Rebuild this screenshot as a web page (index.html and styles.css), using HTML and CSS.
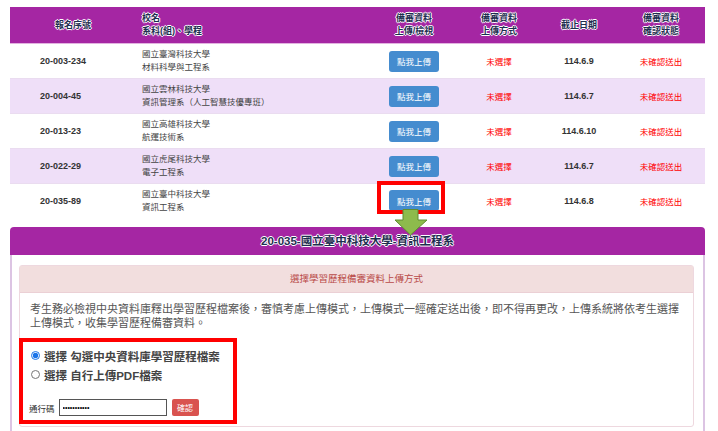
FILE: index.html
```html
<!DOCTYPE html>
<html lang="zh-Hant">
<head>
  <meta charset="UTF-8">
  <meta name="viewport" content="width=device-width, initial-scale=1.0">
  <title>備審資料上傳</title>
  <link rel="stylesheet" href="styles.css">
</head>
<body>
  <div class="page">
    <!-- 報名清單 -->
    <table class="apply-table">
      <colgroup>
        <col style="width:126px">
        <col style="width:235px">
        <col style="width:86px">
        <col style="width:84px">
        <col style="width:76px">
        <col style="width:88px">
      </colgroup>
      <thead>
        <tr>
          <th>報名序號</th>
          <th class="left">校名<br>系科(組)、學程</th>
          <th>備審資料<br>上傳/檢視</th>
          <th>備審資料<br>上傳方式</th>
          <th>截止日期</th>
          <th>備審資料<br>確認狀態</th>
        </tr>
      </thead>
      <tbody>
        <tr>
          <td class="num sn">20-003-234</td>
          <td class="school">國立臺灣科技大學<br>材料科學與工程系</td>
          <td><button class="btn-upload" type="button">點我上傳</button></td>
          <td class="red">未選擇</td>
          <td class="num">114.6.9</td>
          <td class="red">未確認送出</td>
        </tr>
        <tr>
          <td class="num sn">20-004-45</td>
          <td class="school">國立雲林科技大學<br>資訊管理系（人工智慧技優專班）</td>
          <td><button class="btn-upload" type="button">點我上傳</button></td>
          <td class="red">未選擇</td>
          <td class="num">114.6.7</td>
          <td class="red">未確認送出</td>
        </tr>
        <tr>
          <td class="num sn">20-013-23</td>
          <td class="school">國立高雄科技大學<br>航運技術系</td>
          <td><button class="btn-upload" type="button">點我上傳</button></td>
          <td class="red">未選擇</td>
          <td class="num">114.6.10</td>
          <td class="red">未確認送出</td>
        </tr>
        <tr>
          <td class="num sn">20-022-29</td>
          <td class="school">國立虎尾科技大學<br>電子工程系</td>
          <td><button class="btn-upload" type="button">點我上傳</button></td>
          <td class="red">未選擇</td>
          <td class="num">114.6.7</td>
          <td class="red">未確認送出</td>
        </tr>
        <tr class="last">
          <td class="num sn">20-035-89</td>
          <td class="school">國立臺中科技大學<br>資訊工程系</td>
          <td>
            <span class="btn-wrap">
              <button class="btn-upload" type="button">點我上傳</button>
              <span class="mark"></span>
              <svg class="arrow" width="34" height="27" viewBox="0 0 34 27">
                <polygon points="9,0.5 24,0.5 24,11 33,11 16.5,26 1,11 9,11" fill="#8dbb4c" stroke="#5f8d32" stroke-width="1"/>
              </svg>
            </span>
          </td>
          <td class="red">未選擇</td>
          <td class="num">114.6.8</td>
          <td class="red">未確認送出</td>
        </tr>
      </tbody>
    </table>

    <!-- 上傳方式 -->
    <div class="panel">
      <div class="panel-head">20-035-國立臺中科技大學-資訊工程系</div>
      <div class="panel-body">
        <div class="upload-box">
          <div class="upload-head">選擇學習歷程備審資料上傳方式</div>
          <div class="upload-body">
            <p class="notice">考生務必檢視中央資料庫釋出學習歷程檔案後，審慎考慮上傳模式，上傳模式一經確定送出後，即不得再更改，上傳系統將依考生選擇上傳模式，收集學習歷程備審資料。</p>
            <form class="choose-form">
              <label class="choice"><input type="radio" name="mode" checked> 選擇 勾選中央資料庫學習歷程檔案</label>
              <label class="choice"><input type="radio" name="mode"> 選擇 自行上傳PDF檔案</label>
              <div class="pass-row">
                <span>通行碼</span>
                <input class="pass" type="password" value="12345678901">
                <button class="btn-ok" type="button">確認</button>
              </div>
            </form>
          </div>
        </div>
      </div>
    </div>
  </div>
</body>
</html>
```

FILE: styles.css
```css
body {
  margin: 0;
  padding: 7px 0 0 10px;
  background: #fff;
  font-family: "Liberation Sans", "Noto Sans CJK TC", sans-serif;
}

.page {
  width: 695px;
}

.apply-table {
  width: 100%;
  border-collapse: collapse;
  table-layout: fixed;
}

.apply-table th {
  background-color: #a526a3;
  height: 36px;
  padding: 0;
  font-size: 9px;
  line-height: 13px;
  font-weight: bold;
  color: #1e2d50;
  text-align: center;
  text-shadow: 1px 0 0 #fff, -1px 0 0 #fff, 0 1px 0 #fff, 0 -1px 0 #fff;
  border-bottom: 1px solid #e2b2e0;
}

.apply-table th.left {
  text-align: left;
  padding-left: 6px;
}

.apply-table td {
  height: 34px;
  padding: 0;
  font-size: 8.5px;
  text-align: center;
  color: #444;
  border-top: 1px solid #eadcf0;
}

.apply-table tbody tr:nth-child(even) td {
  background-color: #efdff8;
}

.apply-table tr.last td {
  height: 33px;
}

.apply-table td.school {
  text-align: left;
  padding-left: 6px;
  line-height: 13px;
}

.apply-table td.num {
  font-weight: bold;
  font-size: 9px;
  color: #333;
}

.apply-table td.sn {
  text-align: left;
  padding-left: 30px;
}

.apply-table td.red {
  color: #f00;
}

.btn-upload {
  width: 50px;
  height: 21px;
  padding: 0;
  border: none;
  border-radius: 3px;
  background-color: #458ccf;
  color: #fff;
  font-family: inherit;
  font-size: 8.5px;
  vertical-align: middle;
}

.btn-wrap {
  position: relative;
  display: inline-block;
  vertical-align: middle;
  line-height: 0;
}

/* annotation marks */
.mark {
  position: absolute;
  left: -12px;
  right: -6px;
  top: -9px;
  bottom: -3px;
  border: 4px solid #f00;
}

.arrow {
  position: absolute;
  left: 5px;
  top: 19px;
  z-index: 2;
}

.panel {
  margin-top: 10px;
}

.panel-head {
  height: 28px;
  line-height: 28px;
  background-color: #a526a3;
  border-radius: 4px 4px 0 0;
  text-align: center;
  font-size: 11.5px;
  font-weight: bold;
  color: #1e2d50;
  text-shadow: 1px 0 0 #fff, -1px 0 0 #fff, 0 1px 0 #fff, 0 -1px 0 #fff;
}

.panel-body {
  border: 2px solid #dcc4e3;
  border-top: none;
  padding: 10px 9px 20px 7px;
}

.upload-box {
  border: 1px solid #eed8df;
  border-radius: 3px;
}

.upload-head {
  height: 26px;
  line-height: 26px;
  background-color: #f2dede;
  border-bottom: 1px solid #ebd0d5;
  color: #b94a48;
  font-size: 9.5px;
  text-align: center;
}

.upload-body {
  padding: 9px 10px 2px;
}

.notice {
  margin: 0;
  font-size: 11px;
  line-height: 14px;
  color: #555;
}

.choose-form {
  box-sizing: border-box;
  width: 218px;
  height: 86px;
  margin: 8px 0 0 -11px;
  padding: 4px 0 0 8px;
  border: 4px solid #f00;
}

.choice {
  display: flex;
  align-items: center;
  gap: 4px;
  height: 19px;
  font-size: 11.5px;
  font-weight: bold;
  color: #444;
}

.choice input {
  width: 9px;
  height: 9px;
  margin: 0;
  accent-color: #1a73e8;
}

.pass-row {
  display: flex;
  align-items: center;
  margin-top: 15px;
  margin-left: -2px;
  font-size: 8.5px;
  color: #333;
}

.pass {
  box-sizing: border-box;
  width: 108px;
  height: 17px;
  margin: 0 0 0 4px;
  padding: 0 3px;
  border: 1px solid #555;
  font-size: 7px;
}

.btn-ok {
  width: 27px;
  height: 17px;
  margin-left: 5px;
  padding: 0;
  border: none;
  border-radius: 2px;
  background-color: #d9534f;
  color: #fff;
  font-family: inherit;
  font-size: 8px;
}
```
